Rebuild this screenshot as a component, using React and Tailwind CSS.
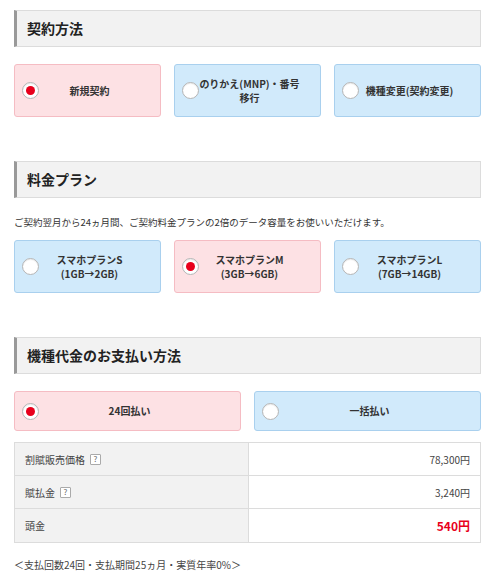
import React from "react";

const font = { fontFamily: '"Noto Sans CJK JP", "Noto Sans", sans-serif' };

function Header({ children }) {
  return (
    <div className="h-[37px] flex items-center bg-[#f2f2f2] border border-[#dcdcdc] border-l-[3px] border-l-[#999999] pl-[10px] text-[14px] font-bold text-[#222]">
      {children}
    </div>
  );
}

function Radio({ checked }) {
  return (
    <div className="w-[17px] h-[17px] rounded-full bg-white border border-[#b5b5b5] flex items-center justify-center shrink-0 shadow-[inset_0_1px_1px_rgba(0,0,0,0.08)]">
      {checked && <div className="w-[9px] h-[9px] rounded-full bg-[#e8001c]" />}
    </div>
  );
}

function Card({ checked, h, children }) {
  const cls = checked
    ? "bg-[#fde1e4] border-[#f5bcc3]"
    : "bg-[#d1eafb] border-[#a9d0ee]";
  return (
    <div className={`flex-1 border rounded-[3px] flex items-center pl-[7px] pr-[20px] ${cls} ${h}`}>
      <Radio checked={checked} />
      <div className="flex-1 text-center text-[10px] font-bold leading-[14px] text-[#333] whitespace-nowrap">
        {children}
      </div>
    </div>
  );
}

function Help() {
  return (
    <span className="inline-flex items-center justify-center w-[11px] h-[11px] border border-[#aaa] rounded-[1px] bg-white text-[8px] leading-none text-[#666] ml-[5px]">?</span>
  );
}

export default function App() {
  return (
    <div style={font} className="w-[500px] h-[580px] bg-white px-[14px] pt-[10px] text-[#333] overflow-hidden">
      <div className="w-[467px]">
        <Header>契約方法</Header>
        <div className="flex gap-[13px] mt-[17px]">
          <Card checked h="h-[53px]">新規契約</Card>
          <Card h="h-[53px]">のりかえ(MNP)・番号<br />移行</Card>
          <Card h="h-[53px]">機種変更(契約変更)</Card>
        </div>

        <div className="mt-[44px]">
          <Header>料金プラン</Header>
        </div>
        <p className="text-[9.5px] text-[#333] mt-[17px] leading-[14px]">
          ご契約翌月から24ヵ月間、ご契約料金プランの2倍のデータ容量をお使いいただけます。
        </p>
        <div className="flex gap-[13px] mt-[11px]">
          <Card h="h-[53px]">スマホプランS<br />(1GB→2GB)</Card>
          <Card checked h="h-[53px]">スマホプランM<br />(3GB→6GB)</Card>
          <Card h="h-[53px]">スマホプランL<br />(7GB→14GB)</Card>
        </div>

        <div className="mt-[44px]">
          <Header>機種代金のお支払い方法</Header>
        </div>
        <div className="flex gap-[13px] mt-[17px]">
          <Card checked h="h-[40px]">24回払い</Card>
          <Card h="h-[40px]">一括払い</Card>
        </div>

        <div className="mt-[11px] border border-[#dcdcdc] text-[10px]">
          <div className="flex h-[33px] border-b border-[#dcdcdc]">
            <div className="w-[234px] bg-[#f2f2f2] border-r border-[#dcdcdc] flex items-center pl-[10px] text-[#444]">
              割賦販売価格<Help />
            </div>
            <div className="flex-1 flex items-center justify-end pr-[10px] text-[#444]">78,300円</div>
          </div>
          <div className="flex h-[33px] border-b border-[#dcdcdc]">
            <div className="w-[234px] bg-[#f2f2f2] border-r border-[#dcdcdc] flex items-center pl-[10px] text-[#444]">
              賦払金<Help />
            </div>
            <div className="flex-1 flex items-center justify-end pr-[10px] text-[#444]">3,240円</div>
          </div>
          <div className="flex h-[33px]">
            <div className="w-[234px] bg-[#f2f2f2] border-r border-[#dcdcdc] flex items-center pl-[10px] text-[#444]">
              頭金
            </div>
            <div className="flex-1 flex items-center justify-end pr-[10px] text-[#e8001c] font-bold text-[12px]">540円</div>
          </div>
        </div>

        <p className="text-[10px] text-[#444] mt-[14px]">
          ＜支払回数24回・支払期間25ヵ月・実質年率0%＞
        </p>
      </div>
    </div>
  );
}
